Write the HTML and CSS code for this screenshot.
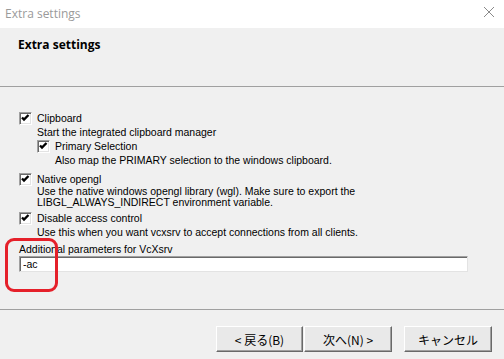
FILE: index.html
```html
<!DOCTYPE html>
<html lang="en">
<head>
  <meta charset="UTF-8" />
  <title>Extra settings</title>
  <link rel="stylesheet" href="styles.css">
</head>
<body>
  <div class="window">
    <div class="titlebar">
      <span class="title">Extra settings</span>
      <svg class="close" width="12" height="12" viewBox="0 0 12 12">
        <path d="M1 1 L11 11 M11 1 L1 11" stroke="#8a8a8a" stroke-width="1" fill="none"/>
      </svg>
    </div>

    <div class="header">
      <h1>Extra settings</h1>
    </div>

    <main class="content">
      <div class="check first">
        <span class="box checked"></span>
        <span>Clipboard</span>
      </div>
      <p class="desc">Start the integrated clipboard manager</p>
      <div class="check sub">
        <span class="box checked"></span>
        <span>Primary Selection</span>
      </div>
      <p class="desc sub-desc">Also map the PRIMARY selection to the windows clipboard.</p>

      <div class="check group">
        <span class="box checked"></span>
        <span>Native opengl</span>
      </div>
      <p class="desc tight">Use the native windows opengl library (wgl). Make sure to export the<br>LIBGL_ALWAYS_INDIRECT environment variable.</p>

      <div class="check group after-tight">
        <span class="box checked"></span>
        <span>Disable access control</span>
      </div>
      <p class="desc">Use this when you want vcxsrv to accept connections from all clients.</p>

      <label class="param-label" for="params">Additional parameters for VcXsrv</label>
      <input id="params" class="param-input" type="text" value="-ac">
    </main>

    <footer>
      <button>&lt; 戻る(B)</button>
      <button>次へ(N) &gt;</button>
      <button class="cancel">キャンセル</button>
    </footer>

    <div class="highlight"></div>
  </div>
</body>
</html>
```

FILE: styles.css
```css
body, html {
  margin: 0;
  padding: 0;
  height: 100%;
  background: #f0f0f0;
  font-family: "Liberation Sans", Arial, sans-serif;
  color: #000;
}

.window {
  position: relative;
  height: 100vh;
  display: flex;
  flex-direction: column;
  overflow: hidden;
}

/* Title bar */
.titlebar {
  height: 28px;
  background: #fff;
  display: flex;
  align-items: center;
  justify-content: space-between;
  padding: 0 9px 0 5px;
  box-sizing: border-box;
}

.title {
  font-family: "Open Sans", "Noto Sans", sans-serif;
  font-size: 12px;
  color: #9a9a9a;
  margin-top: -1px;
}

.close {
  display: block;
  margin-top: -4px;
}

/* Header band */
.header {
  height: 59px;
  box-sizing: border-box;
  padding: 9px 18px 0;
  border-bottom: 1px solid #a0a0a0;
}

.header h1 {
  margin: 0;
  font-family: "Open Sans", "Noto Sans", sans-serif;
  font-size: 12px;
  font-weight: bold;
  line-height: 16px;
}

/* Content */
.content {
  flex: 1;
  padding: 25px 0 0 19px;
  font-size: 10.5px;
}

.check {
  display: flex;
  align-items: center;
  gap: 5px;
  height: 13px;
  line-height: 13px;
}

.check.sub {
  margin: 1px 0 0 18px;
}

.check.group {
  margin-top: 6px;
}

.check.group.after-tight {
  margin-top: 4px;
}

.box {
  width: 13px;
  height: 13px;
  box-sizing: border-box;
  background: #fff;
  border: 1px solid;
  border-color: #a0a0a0 #fff #fff #a0a0a0;
  box-shadow: inset 1px 1px #696969, inset -1px -1px #e3e3e3;
  flex-shrink: 0;
}

.box.checked {
  background: #fff url("data:image/svg+xml,%3Csvg xmlns='http://www.w3.org/2000/svg' width='11' height='11'%3E%3Cpath d='M2 4.5 L4 6.5 L8.5 2' stroke='black' stroke-width='2.4' fill='none'/%3E%3C/svg%3E") center no-repeat;
}

.desc {
  margin: 1px 0 0 18px;
  line-height: 13px;
}

.desc.sub-desc {
  margin-left: 36px;
}

.desc.tight {
  margin-top: 0;
  line-height: 11px;
}

.param-label {
  display: block;
  margin-top: 4px;
  line-height: 13px;
}

.param-input {
  display: block;
  margin-top: 0;
  width: 449px;
  height: 16px;
  box-sizing: border-box;
  padding: 0 3px;
  font: inherit;
  background: #fff;
  border: 1px solid;
  border-color: #a0a0a0 #e3e3e3 #e3e3e3 #a0a0a0;
  box-shadow: inset 1px 1px #696969;
  outline: none;
}

/* Footer buttons */
footer {
  height: 50px;
  box-sizing: border-box;
  border-top: 1px solid #a0a0a0;
  padding: 16px 12px 0 0;
  display: flex;
  justify-content: flex-end;
}

footer button {
  width: 88px;
  height: 26px;
  background: #e9e9e9;
  border: 1px solid;
  border-color: #fff #696969 #696969 #fff;
  box-shadow: inset -1px -1px #a0a0a0;
  font-family: "Noto Sans CJK JP", sans-serif;
  font-size: 12px;
  color: #000;
  padding: 0;
}

footer button:first-child {
  width: 87px;
  margin-right: 1px;
}

footer button.cancel {
  margin-left: 12px;
}

/* red annotation */
.highlight {
  position: absolute;
  left: 5px;
  top: 238px;
  width: 53px;
  height: 54px;
  box-sizing: border-box;
  border: 3px solid #e5202a;
  border-radius: 9px;
}
```
